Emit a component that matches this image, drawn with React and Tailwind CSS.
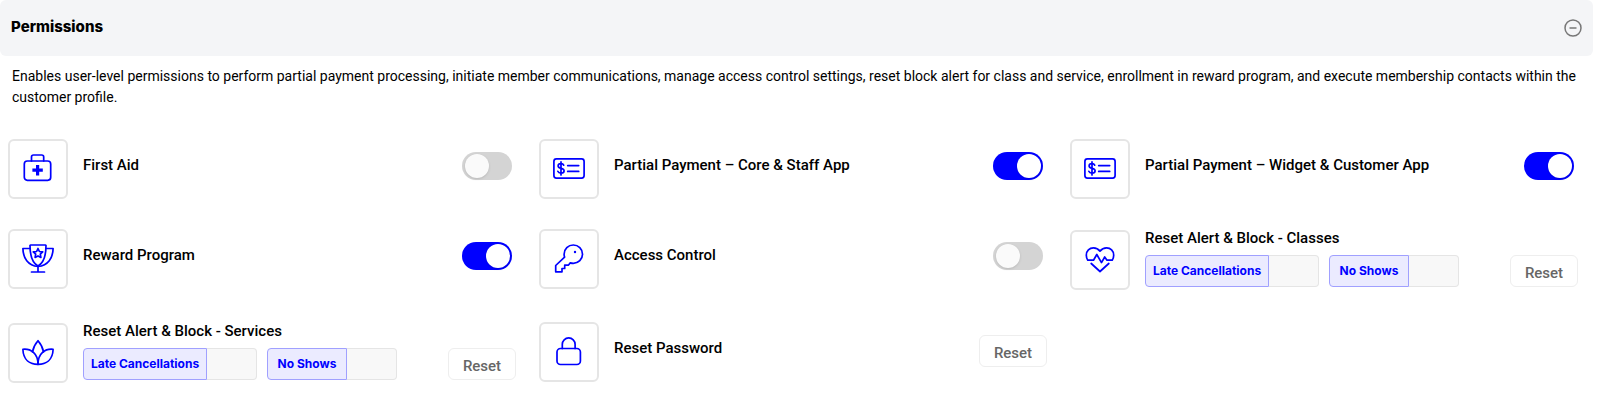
import React, { useState } from 'react';

const icons = {
  firstAid: (
    <>
      <rect x="2.300" y="9" width="26.400" height="19.300" rx="3" />
      <path d="M9.500 9V5a2 2 0 0 1 2-2h8.200a2 2 0 0 1 2 2v4" />
      <path d="M15.600 13v10.400M10.400 18.200h10.400" strokeWidth="3.200" strokeLinecap="butt" />
    </>
  ),
  payment: (
    <>
      <rect x="0.9" y="6.9" width="30.2" height="19.2" rx="2.5" />
      <path d="M10.700 13.2c-.5-1.1-1.500-1.500-2.700-1.500-1.600 0-2.900.8-2.900 2.200 0 3.200 6 1.600 6 4.900 0 1.500-1.400 2.400-3.100 2.400-1.500 0-2.700-.6-3.200-1.900M8 9.900v13" />
      <path d="M14.700 13.600h11M14.700 19.400h11" />
    </>
  ),
  trophy: (
    <>
      <path d="M8.500 3h15l.5.6c0 9-1.700 17-8 20.400C9.700 20.600 8 12.600 8 3.600z" />
      <path d="M8 6.500H.9C1 16 6 23.500 16 24.500 26 23.500 31 16 31.100 6.500H24" />
      <path d="M16 24.500v5M9.500 30h13" />
      <path d="m16 6.500 1.400 3 3.300.4-2.400 2.300.6 3.200-2.900-1.500-2.900 1.500.6-3.200-2.400-2.300 3.300-.4z" />
    </>
  ),
  key: (
    <>
      <path d="M20.300 3a9.200 9.200 0 0 1 0 18.400c-1 0-2-.2-3-.5l-2 2.300h-3.600v3.300H9v3.300H2.700v-6.300l8.900-8.400c-.4-1-.5-1.900-.5-2.900A9.200 9.200 0 0 1 20.300 3z" />
      <circle cx="22" cy="10" r="1.200" fill="currentColor" stroke="none" />
    </>
  ),
  heart: (
    <>
      <path d="M3.800 17.200C2.400 15 2.300 13.500 2.300 12.200 2.300 7.800 5.500 4.900 9.400 4.900c2.700 0 5 1.200 6.600 3.200 1.600-2 3.900-3.200 6.600-3.200 3.900 0 7.100 2.900 7.100 7.300 0 1.300-.1 2.800-1.500 5H23l-2.300-3.200-3.200 5.600-4.700-8.100-3.300 5.700z" />
      <path d="m7.200 20.500 8.800 8 8.800-8" />
    </>
  ),
  lotus: (
    <>
      <path d="M10.500 15.800C11.300 11.500 13.500 7.500 16 4.700c2.500 2.800 4.700 6.800 5.500 11.100" />
      <path d="M16 28.300C8 28.300 1.200 24 .9 13.300c8-.8 15.100 4.200 15.100 15z" />
      <path d="M16 28.300c8 0 14.800-4.300 15.100-15-8-.8-15.100 4.200-15.100 15z" />
    </>
  ),
  lock: (
    <>
      <rect x="4" y="13.500" width="23.400" height="16" rx="3.500" />
      <path d="M9.300 13.500V9.300a6.400 6.400 0 0 1 12.800 0v4.200" />
    </>
  ),
};

const permissions = [
  { id: 'first-aid', icon: 'firstAid', label: 'First Aid', type: 'toggle' },
  { id: 'partial-staff', icon: 'payment', label: 'Partial Payment – Core & Staff App', type: 'toggle' },
  { id: 'partial-customer', icon: 'payment', label: 'Partial Payment – Widget & Customer App', type: 'toggle' },
  { id: 'reward', icon: 'trophy', label: 'Reward Program', type: 'toggle' },
  { id: 'access', icon: 'key', label: 'Access Control', type: 'toggle' },
  { id: 'classes', icon: 'heart', label: 'Reset Alert & Block - Classes', type: 'alert' },
  { id: 'services', icon: 'lotus', label: 'Reset Alert & Block - Services', type: 'alert' },
  { id: 'password', icon: 'lock', label: 'Reset Password', type: 'reset' },
];

const IconTile = ({ name }) => (
  <div className="flex size-15 shrink-0 items-center justify-center rounded-md border-2 border-[#e5e5e5] pb-0.5 text-[#0000ff]">
    <svg
      viewBox="0 0 32 32"
      className="size-8"
      fill="none"
      stroke="currentColor"
      strokeWidth="1.7"
      strokeLinecap="round"
      strokeLinejoin="round"
      aria-hidden="true"
    >
      {icons[name]}
    </svg>
  </div>
);

const Toggle = ({ id, checked, onChange }) => (
  <input
    id={id}
    type="checkbox"
    role="switch"
    checked={checked}
    onChange={onChange}
    className="mr-[19px] mb-1.5 flex h-7 w-[50px] shrink-0 cursor-pointer appearance-none items-center rounded-full bg-[#d4d4d4] px-[3px] before:size-6 before:rounded-full before:bg-[#fafafa] before:shadow checked:justify-end checked:bg-[#0000ff] checked:px-0.5 checked:before:bg-white"
  />
);

const ResetButton = () => (
  <button
    type="button"
    className="h-8 w-[68px] shrink-0 rounded-md border border-[#eeeeee] bg-white pt-1 font-['Roboto',sans-serif] text-[15px] leading-5 font-medium text-[#666666]"
  >
    Reset
  </button>
);

const Counter = ({ id, label, width }) => (
  <div className="flex h-8">
    <label
      htmlFor={id}
      className={`flex items-center justify-center rounded-l border border-[#a0a0ff] bg-[#ebebff] font-['Inter',sans-serif] text-xs font-bold whitespace-nowrap text-[#0000ff] ${width}`}
    >
      {label}
    </label>
    <input id={id} type="text" className="w-[50px] rounded-r border border-l-0 border-[#e5e5e5] bg-[#f8f8f8] px-2 text-xs" />
  </div>
);

const AlertCell = ({ item }) => (
  <div className="flex pt-px pb-0.5 pl-2">
    <IconTile name={item.icon} />
    <div className="ml-[15px] flex-1">
      <h3 className="h-[25px] text-[15px] leading-4 font-medium">{item.label}</h3>
      <div className="flex gap-2.5">
        <Counter id={`${item.id}-late`} label="Late Cancellations" width="w-[124px]" />
        <Counter id={`${item.id}-no-shows`} label="No Shows" width="w-20" />
      </div>
    </div>
    <div className="mr-[15px] pt-[25px]">
      <ResetButton />
    </div>
  </div>
);

const App = () => {
  const [open, setOpen] = useState(true);
  const [enabled, setEnabled] = useState({
    'partial-staff': true,
    'partial-customer': true,
    reward: true,
  });

  const toggle = (id) => setEnabled((prev) => ({ ...prev, [id]: !prev[id] }));

  const renderCell = (item) => {
    if (item.type === 'alert') {
      return <AlertCell key={item.id} item={item} />;
    }

    return (
      <div key={item.id} className="flex h-15 items-center pl-2">
        <IconTile name={item.icon} />
        {item.type === 'toggle' ? (
          <>
            <label htmlFor={item.id} className="mb-2 ml-[15px] flex-1 text-[15px] leading-5 font-medium">
              {item.label}
            </label>
            <Toggle id={item.id} checked={!!enabled[item.id]} onChange={() => toggle(item.id)} />
          </>
        ) : (
          <>
            <h3 className="mb-2 ml-[15px] flex-1 text-[15px] leading-5 font-medium">{item.label}</h3>
            <div className="mr-[15px] mb-0.5">
              <ResetButton />
            </div>
          </>
        )}
      </div>
    );
  };

  return (
    <section className="mr-[11px] bg-white font-['Roboto',sans-serif] text-black">
      {/* Header */}
      <div className="flex h-14 items-center justify-between rounded-md bg-[#f4f5f7] px-[11px]">
        <h2 className="pb-0.5 font-['Inter',sans-serif] text-[15px] font-extrabold">Permissions</h2>
        <button type="button" aria-label="Collapse permissions" aria-expanded={open} onClick={() => setOpen(!open)}>
          <svg viewBox="0 0 18 18" className="size-[18px]" fill="none" stroke="#777777" strokeWidth="1.5" aria-hidden="true">
            <circle cx="9" cy="9" r="8" />
            <path d="M5.500 9h7" />
          </svg>
        </button>
      </div>

      {open && (
        <>
          <p className="pt-[10px] pr-[11px] pl-3 text-sm leading-[21px]">
            Enables user-level permissions to perform partial payment processing, initiate member communications, manage
            access control settings, reset block alert for class and service, enrollment in reward program, and execute
            membership contacts within the customer profile.
          </p>

          {/* Permission grid */}
          <div className="mt-[31px] grid grid-cols-3 gap-y-[30px]">{permissions.map(renderCell)}</div>
        </>
      )}
    </section>
  );
};

export default App;
